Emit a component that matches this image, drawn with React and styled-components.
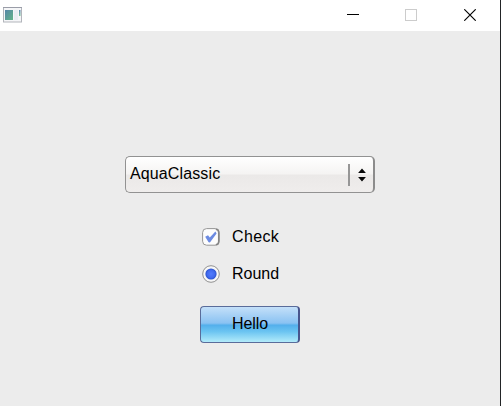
import React from 'react';
import styled, { createGlobalStyle } from 'styled-components';

const GlobalStyle = createGlobalStyle`
  * { box-sizing: border-box; }
  body {
    margin: 0;
    overflow: hidden;
    background: #ececec;
    color: #000;
    font: 16px/20px "Liberation Sans", Arial, sans-serif;
  }
  svg { display: block; }
`;

const Window = styled.div`
  width: 501px;
  height: 406px;
  display: flex;
  flex-direction: column;
  background: #ececec;
  border-right: 1px solid #222426;
`;

const TitleBar = styled.header`
  height: 31px;
  flex: none;
  display: flex;
  justify-content: space-between;
  padding: 0 1px 0 3px;
  background: #fff;
`;

const AppIcon = styled.svg`
  margin-top: 7px;
`;

const WindowControls = styled.div`
  display: flex;
`;

const WindowButton = styled.button`
  width: ${({ $width }) => $width}px;
  height: 30px;
  padding: 0;
  border: 0;
  background: none;
  display: grid;
  place-items: center;
`;

const Content = styled.main`
  flex: 1;
  display: flex;
  flex-direction: column;
  align-items: center;
  padding-top: 125px;
`;

const ComboBox = styled.div`
  width: 250px;
  height: 37px;
  display: flex;
  align-items: center;
  padding: 0 6px 2px 4px;
  border: 1px solid #929292;
  border-right: 2px solid #8c8c8c;
  border-radius: 5px;
  background: linear-gradient(#ffffff 0%, #f5f4f3 47%, #ebe9e8 53%, #efedec 100%);
`;

const ComboLabel = styled.span`
  flex: 1;
  letter-spacing: 0.12px;
`;

const ComboDivider = styled.span`
  width: 2px;
  height: 22px;
  margin: 2px 7px 0 0;
  background: #969696;
`;

const Arrows = styled.svg`
  margin-top: 3px;
`;

const Options = styled.div`
  width: 100px;
  margin-top: 34px;
  padding-left: 2px;
  display: flex;
  flex-direction: column;
  gap: 17px;
`;

const Option = styled.label`
  height: 20px;
  display: flex;
  align-items: center;
  gap: 12px;
  letter-spacing: ${({ $tracking = 0 }) => $tracking}px;
`;

const AquaButton = styled.button`
  width: 100px;
  height: 37px;
  margin-top: 22px;
  padding: 0 0 2px 1px;
  border: 1px solid #5a6c9a;
  border-right: 2px solid #48558c;
  border-radius: 4px;
  background: linear-gradient(#c4e0f9 0%, #8ac2f2 46%, #53afec 52%, #6bc4f1 70%, #b2ebfa 100%);
  color: #000;
  font: inherit;
  letter-spacing: -0.1px;
`;

export default function App() {
  return (
    <>
      <GlobalStyle />
      <Window>
        <TitleBar>
          <AppIcon width="19" height="16" viewBox="0 0 19 16">
            <defs>
              <linearGradient id="panel" x1="0" y1="0" x2="1" y2="1">
                <stop stopColor="#5685a8" />
                <stop offset="1" stopColor="#62b488" />
              </linearGradient>
              <linearGradient id="strip" x1="0" y1="0" x2="0" y2="1">
                <stop stopColor="#5f86b4" />
                <stop offset="1" stopColor="#7fc79a" />
              </linearGradient>
            </defs>
            <rect x=".5" y=".5" width="18" height="14.5" fill="#f5f6f8" stroke="#b2b5bb" />
            <path d="M0 .5H19" stroke="#9a9da8" />
            <rect x="2" y="3" width="8" height="10" fill="url(#panel)" />
            <rect x="11" y="3" width="4" height="10" fill="#e9edf2" />
            <rect x="16" y="3" width="1.5" height="6" fill="url(#strip)" />
          </AppIcon>
          <WindowControls>
            <WindowButton $width={59} aria-label="Minimize">
              <svg width="12" height="12" shapeRendering="crispEdges">
                <rect y="5" width="12" height="1" />
              </svg>
            </WindowButton>
            <WindowButton $width={58} aria-label="Maximize" disabled>
              <svg width="12" height="12">
                <rect x=".5" y=".5" width="11" height="11" fill="none" stroke="#cccccc" />
              </svg>
            </WindowButton>
            <WindowButton $width={59} aria-label="Close">
              <svg width="12" height="12">
                <path d="M.3.3 11.7 11.7M11.7.3.3 11.7" fill="none" stroke="#000" strokeWidth="1.15" />
              </svg>
            </WindowButton>
          </WindowControls>
        </TitleBar>
        <Content>
          <ComboBox role="combobox">
            <ComboLabel>AquaClassic</ComboLabel>
            <ComboDivider />
            <Arrows width="10" height="14" viewBox="0 0 10 14">
              <path d="M5 .5 8.9 5H1.1ZM1.1 9H8.9L5 13.5Z" fill="#080808" />
            </Arrows>
          </ComboBox>
          <Options>
            <Option $tracking={0.35}>
              <svg width="18" height="18" viewBox="0 0 18 18">
                <rect x=".6" y=".6" width="16.6" height="16.6" rx="4" fill="#fdfdfd" stroke="#969696" />
                <path d="M13.8 1.2Q16.7 1.2 16.7 4.5V13.5Q16.7 16.7 13.8 16.7" fill="none" stroke="#858585" strokeWidth="1.5" />
                <path d="M3.2 8.8 6 7.2 7.8 9.4 13.4 3.6 14.6 5.6 7.9 14.6 6.6 14.2Z" fill="#6c8be2" />
              </svg>
              Check
            </Option>
            <Option>
              <svg width="18" height="18" viewBox="0 0 18 18">
                <defs>
                  <radialGradient id="dot">
                    <stop stopColor="#527cff" />
                    <stop offset=".65" stopColor="#426bef" />
                    <stop offset="1" stopColor="#2951cc" />
                  </radialGradient>
                </defs>
                <circle cx="9" cy="9" r="8.3" fill="#f7f7f7" stroke="#929292" />
                <circle cx="9" cy="9" r="5.6" fill="url(#dot)" />
              </svg>
              Round
            </Option>
          </Options>
          <AquaButton>Hello</AquaButton>
        </Content>
      </Window>
    </>
  );
}
